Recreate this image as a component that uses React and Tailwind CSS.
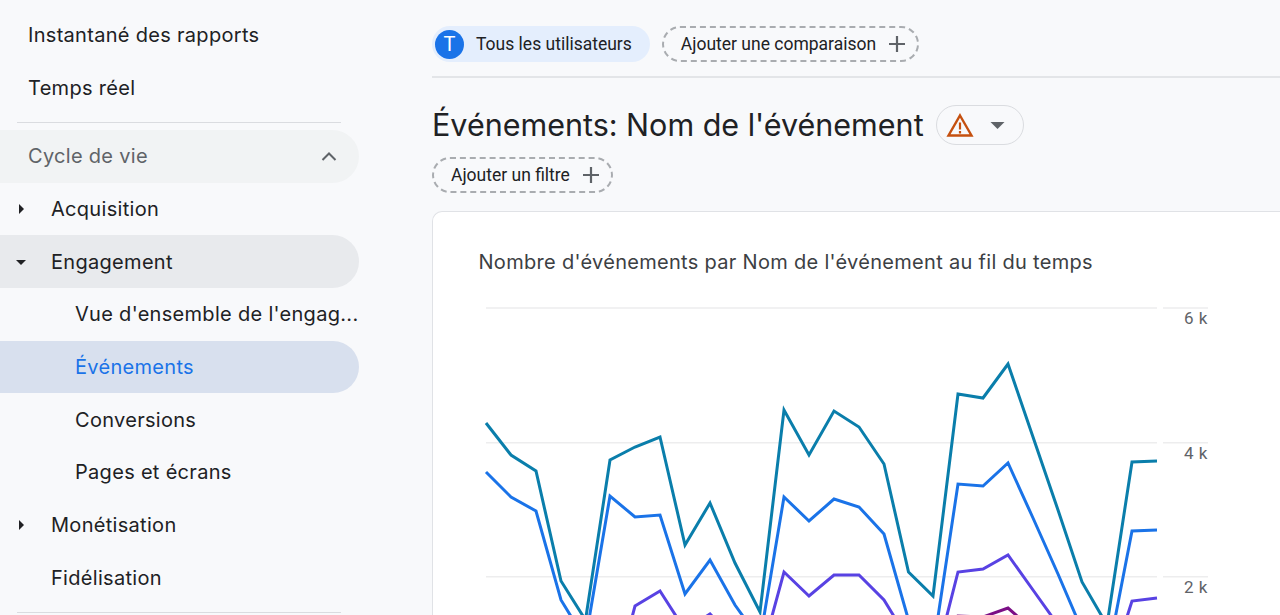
const font = "font-['Roboto','Noto_Sans',sans-serif]";
const side = "font-['Inter','Noto_Sans',sans-serif]";

const X = [486, 511, 536, 561, 585.5, 610, 635, 660, 685, 710, 735, 760, 784, 809, 834, 859, 884, 908.5, 933, 958, 983, 1008, 1033, 1058, 1082, 1107, 1132, 1157];
const teal = [423, 455, 471, 581, 620, 460, 447, 437, 545, 503, 563, 612, 410, 455, 411, 427, 464, 572, 596, 394, 398, 364, 437, 510, 582, 625, 462, 461];
const blue = [472, 497, 511, 600, 640, 496, 517, 515, 594, 560, 605, 640, 497, 521, 499, 507, 534, 620, 650, 484, 486, 463, 518, 574, 630, 660, 531, 530];
const purple = [680, 690, 700, 700, 700, 700, 606, 591, 630, 614, 640, 660, 572, 596, 575, 575, 600, 640, 670, 572, 569, 555, 590, 625, 660, 680, 601, 598];
const plum = [700, 700, 700, 700, 700, 700, 680, 660, 670, 660, 680, 700, 650, 660, 650, 650, 660, 680, 690, 616, 617, 608, 630, 650, 680, 700, 650, 650];
const pts = (ys) => X.map((x, i) => `${x - 432},${ys[i] - 212}`).join(" ");

function Caret({ down }) {
  return (
    <svg width="10" height="10" viewBox="0 0 10 10" className="absolute left-4 top-1/2 -translate-y-1/2 text-[#202124]">
      {down ? <path d="M0 3h10L5 8z" fill="currentColor" /> : <path d="M3 0l5 5-5 5z" fill="currentColor" />}
    </svg>
  );
}

function Item({ children, className = "", pad = "pl-7", caret, right }) {
  return (
    <div className={`relative h-[52.7px] flex items-center justify-between ${pad} rounded-r-full w-[359px] text-[20px] tracking-[0.3px] text-[#202124] ${className}`}>
      {caret && <Caret down={caret === "down"} />}
      <span className="whitespace-nowrap">{children}</span>
      {right}
    </div>
  );
}

function Plus() {
  return (
    <svg width="18" height="18" viewBox="0 0 18 18" className="text-[#5f6368]">
      <path d="M9 1v16M1 9h16" stroke="currentColor" strokeWidth="2.2" fill="none" />
    </svg>
  );
}

function Dashed({ children }) {
  return (
    <div className="h-9 flex items-center gap-3 pl-[17px] pr-[11px] rounded-full border-2 border-dashed border-[#a9acb0] text-[17.5px] font-[450] text-[#202124]">
      <span>{children}</span>
      <Plus />
    </div>
  );
}

export default function App() {
  return (
    <div className={`w-[1280px] h-[615px] overflow-hidden bg-[#f8f9fb] flex ${font}`}>
      <aside className={`w-[432px] shrink-0 pt-[8.5px] ${side}`}>
        <Item>Instantané des rapports</Item>
        <Item>Temps réel</Item>
        <div className="h-[1px] bg-[#dadce0] ml-[17px] w-[324px] mt-[8px] mb-[7px]" />
        <Item
          className="bg-[#f1f3f4] !text-[#5f6368] pr-[22px]"
          right={
            <svg width="16" height="10" viewBox="0 0 16 10" className="text-[#5f6368] shrink-0">
              <path d="M1.5 9L8 2.5 14.5 9" stroke="currentColor" strokeWidth="2" fill="none" />
            </svg>
          }
        >
          Cycle de vie
        </Item>
        <Item pad="pl-[51px]" caret="right">Acquisition</Item>
        <Item pad="pl-[51px]" caret="down" className="bg-[#e8eaed]">Engagement</Item>
        <Item pad="pl-[75px] pr-2">Vue d'ensemble de l'engag...</Item>
        <Item pad="pl-[75px]" className="bg-[#d8e0ee] !text-[#1a73e8]">Événements</Item>
        <Item pad="pl-[75px]">Conversions</Item>
        <Item pad="pl-[75px]">Pages et écrans</Item>
        <Item pad="pl-[51px]" caret="right">Monétisation</Item>
        <Item pad="pl-[51px]">Fidélisation</Item>
        <div className="h-[1px] bg-[#dadce0] ml-[17px] w-[324px] mt-[8px]" />
      </aside>
      <main className="flex-1 min-w-0 flex flex-col">
        <div className="h-[78px] shrink-0 border-b-2 border-[#e3e5e8] flex items-center gap-3 pt-[12px]">
          <div className="h-9 flex items-center gap-3 pl-[3px] pr-[18px] rounded-full bg-[#e4eefd] text-[17.5px] text-[#202124]">
            <div className="w-[29px] h-[29px] rounded-full bg-[#1a73e8] flex items-center justify-center text-white text-[20px]">T</div>
            <span>Tous les utilisateurs</span>
          </div>
          <Dashed>Ajouter une comparaison</Dashed>
        </div>
        <div className="flex items-center gap-3 mt-[26px] h-[42px] shrink-0">
          <h1 className={`text-[30.5px] font-normal text-[#202124] whitespace-nowrap ${side}`}>Événements: Nom de l'événement</h1>
          <div className="w-[88px] h-[40px] rounded-full border-[1.5px] border-[#dadce0] flex items-center pl-[9px] gap-[16px]">
            <svg width="28" height="24" viewBox="0 0 28 24">
              <path d="M14 2.5L25.5 22.5H2.5z" stroke="#c5500f" strokeWidth="2.4" fill="none" strokeLinejoin="miter" />
              <path d="M14 9.5v7M14 18v2.5" stroke="#c5500f" strokeWidth="2.2" />
            </svg>
            <svg width="15" height="7" viewBox="0 0 16 8">
              <path d="M0 0h16L8 8z" fill="#5f6368" />
            </svg>
          </div>
        </div>
        <div className="flex mt-[11px] shrink-0">
          <Dashed>Ajouter un filtre</Dashed>
        </div>
        <section className="relative mt-[18px] flex-1 bg-white border-[1.5px] border-b-0 border-r-0 border-[#e0e2e6] rounded-tl-[10px] w-[860px]">
          <h2 className={`absolute left-[45.5px] top-[35px] text-[20px] tracking-[0.3px] font-normal text-[#3c4043] whitespace-nowrap ${side}`}>
            Nombre d'événements par Nom de l'événement au fil du temps
          </h2>
          <svg width="848" height="403" className="absolute left-[-1.5px] top-[-0.5px]" fill="none">
            {[96, 230.7, 364.7].map((y) => (
              <g key={y} stroke="#ededee" strokeWidth="1.5">
                <path d={`M54 ${y}H725`} />
                <path d={`M731 ${y}H776`} />
              </g>
            ))}
            <polyline points={pts(plum)} stroke="#7b0f86" strokeWidth="3" />
            <polyline points={pts(purple)} stroke="#5842e3" strokeWidth="3" />
            <polyline points={pts(blue)} stroke="#1a73e8" strokeWidth="3" />
            <polyline points={pts(teal)} stroke="#0a7eab" strokeWidth="3" />
          </svg>
          <span className="absolute left-[751px] top-[94px] text-[17px] tracking-[0.5px] text-[#5f6368]">6 k</span>
          <span className="absolute left-[751px] top-[229px] text-[17px] tracking-[0.5px] text-[#5f6368]">4 k</span>
          <span className="absolute left-[751px] top-[363px] text-[17px] tracking-[0.5px] text-[#5f6368]">2 k</span>
        </section>
      </main>
    </div>
  );
}
